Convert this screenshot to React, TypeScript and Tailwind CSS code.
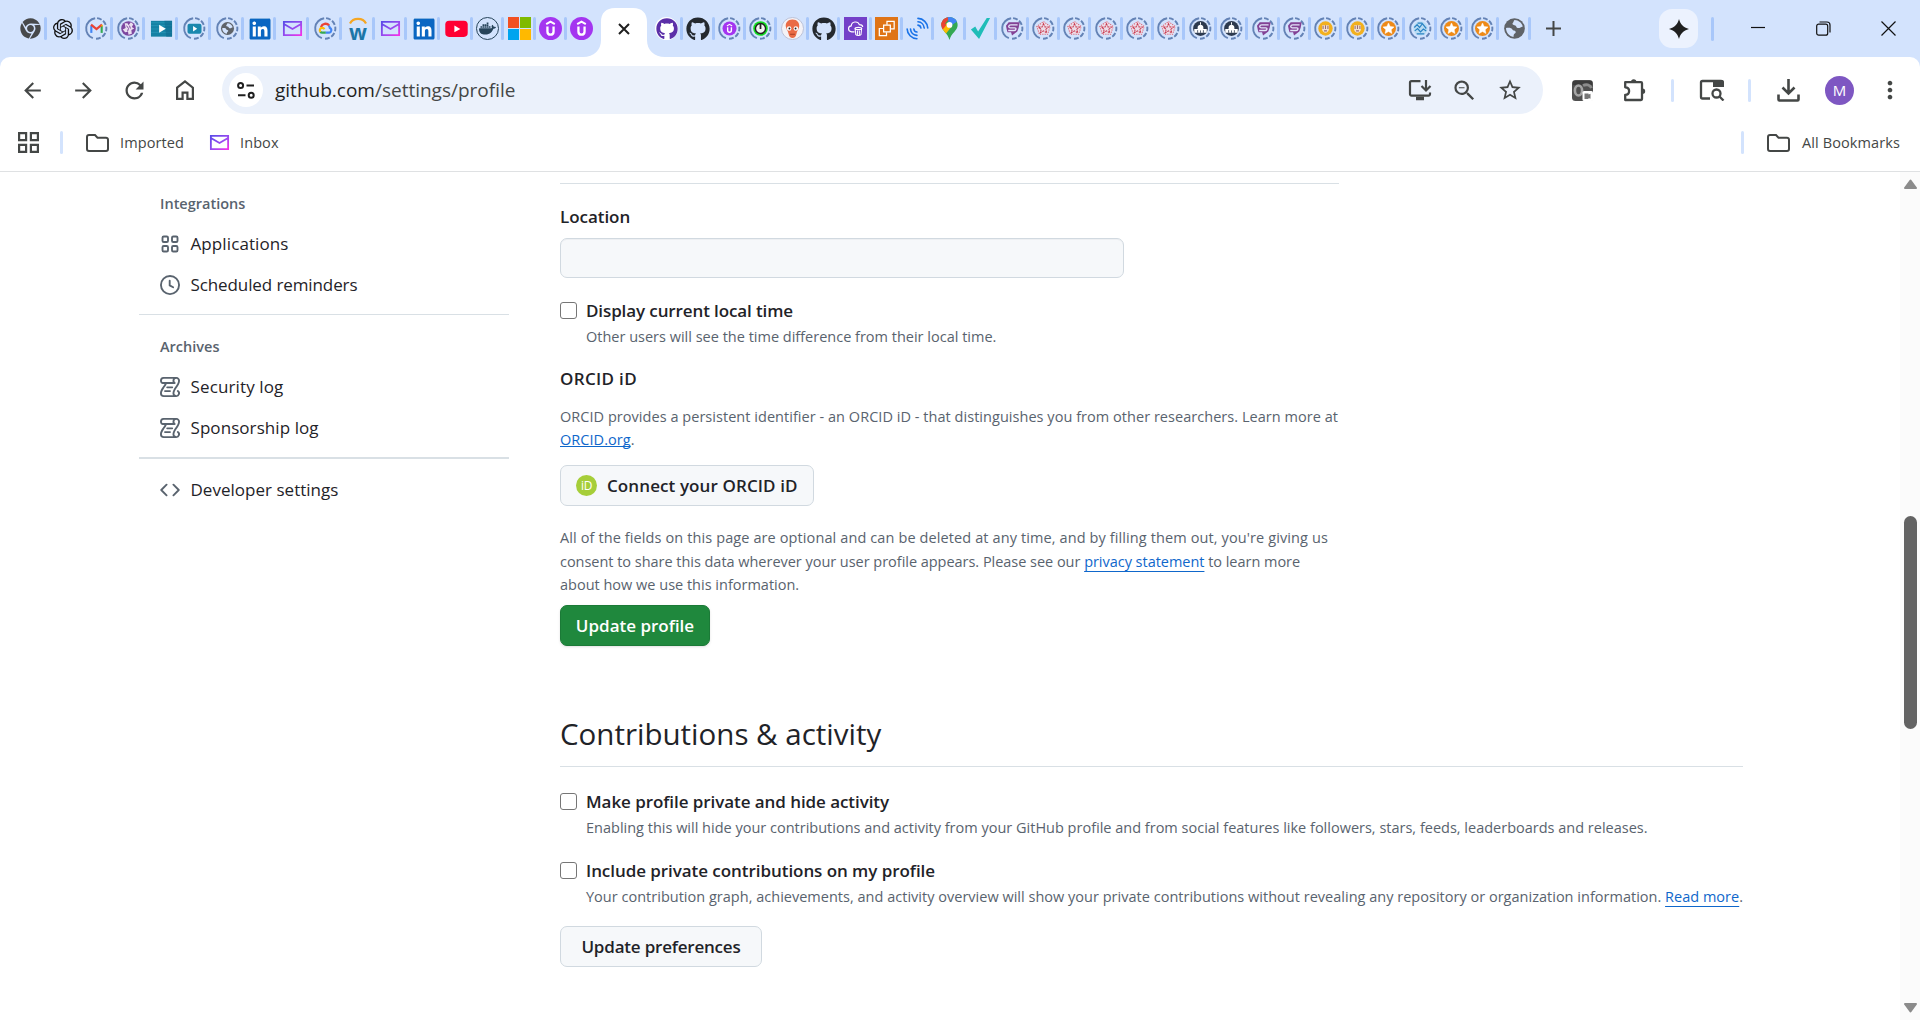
import React, { ReactNode } from "react";
import { FaChrome, FaGithub, FaLinkedin } from "react-icons/fa";
import { SiDocker, SiOpenai } from "react-icons/si";
import { MdArrowBack, MdArrowForward, MdRefresh, MdStarOutline, MdZoomOut, MdMoreVert } from "react-icons/md";

/* ---------- favicons ---------- */

function Svg({ children, size = 23 }: { children: ReactNode; size?: number }) {
  return (
    <svg className="shrink-0 overflow-visible" width={size} height={size} viewBox="0 0 24 24" fill="none">
      {children}
    </svg>
  );
}

function Ring({ children }: { children: ReactNode }) {
  return (
    <Svg>
      <path d="M8.2 22.1A10.8 10.8 0 0 1 10.6 1.3" stroke="#6483b6" strokeWidth="2" />
      <path
        d="M12.6 1.2A10.8 10.8 0 0 1 10.4 22.7"
        stroke="#6483b6"
        strokeWidth="2"
        strokeDasharray="5 1.9"
      />
      {children}
    </Svg>
  );
}

const Mail = () => (
  <Svg>
    <defs>
      <linearGradient id="mail" x1="0" y1="0" x2="1" y2="1">
        <stop offset="0" stopColor="#5a4be8" />
        <stop offset="0.55" stopColor="#9a4af0" />
        <stop offset="1" stopColor="#f530e8" />
      </linearGradient>
    </defs>
    <path
      d="M3 5h18v14H3zM3.5 7.5l8.5 5 8.5-5"
      stroke="url(#mail)"
      strokeWidth="1.9"
      strokeLinejoin="miter"
    />
  </Svg>
);

const Gmail = () => (
  <Ring>
    <path d="M6.6 16.6V9" stroke="#4285f4" strokeWidth="2.2" />
    <path d="M17.4 16.6V9" stroke="#34a853" strokeWidth="2.2" />
    <path d="M6.3 8l5.7 4.6L17.7 8" stroke="#ea4335" strokeWidth="2.4" />
    <path d="M16.3 9.4L18.5 7.7V10" fill="#fbbc04" />
  </Ring>
);

const Purple = () => (
  <Ring>
    <circle cx="12" cy="12" r="7.6" fill="#7d479f" />
    <path
      d="M8 6.500h3l1 2 2.500-3 2.500 2-1.500 3L18 12l-3 1.500.5 4-3.500 1-.5-3-3 .5L6 13l3-1.500z"
      fill="#eadff0"
    />
    <path d="M10 9l2 3-1 3M13 9l1 3" stroke="#7d479f" strokeWidth="1" />
  </Ring>
);

const Play = () => (
  <Svg>
    <path d="M1 4h22v16.500H1z" fill="#1581a4" />
    <path d="M1 6h22M1 9h22M1 12.500h22M1 16h22" stroke="#2c9cbd" strokeWidth="0.7" />
    <path d="M15 4h8v16.500h-6z" fill="#0f6b90" opacity="0.6" />
    <path d="M9.500 8l7 4.200-7 4.200z" fill="#fff" />
  </Svg>
);

const PlayRing = () => (
  <Ring>
    <rect x="4.7" y="7" width="14.6" height="10.4" rx="2" fill="#1a88ae" />
    <path d="M10.500 9.300l4.300 2.900-4.300 2.900z" fill="#fff" />
  </Ring>
);

const GlobeShape = ({ r }: { r: number }) => (
  <g transform={`translate(12 12) scale(${r / 10})`}>
    <circle r="10" fill="#5f6368" />
    <path
      d="M0 -8.200C4 -8 7 -5.500 8 -2C6 -1.500 5 0 3 -0.500C1.500 -1 2 -3 0 -3.200C-2 -3.300 -2.500 -4.500 -1.500 -5.500C-0.800 -6.200 -1 -7.500 0 -8.200Z"
      fill="#d3e3fd"
    />
    <path
      d="M-8.200 -0.500C-5 -0.800 -2.500 -0.500 -2 1C-1.600 2.300 1 1.700 1.200 3.500C1.300 5 -0.800 5 -0.800 6.500L-1 8.200C-5 7.500 -8.200 4 -8.200 -0.500Z"
      fill="#d3e3fd"
    />
  </g>
);
const GlobeRing = () => (
  <Ring>
    <GlobeShape r={6.8} />
  </Ring>
);
const Globe = () => (
  <Svg>
    <GlobeShape r={10.8} />
  </Svg>
);

const LinkedIn = () => (
  <span className="flex size-[21px] items-center justify-center rounded-[3px] bg-white">
    <FaLinkedin size={24} color="#0a66c2" className="shrink-0" />
  </span>
);

const Cloud = () => (
  <Ring>
    <path d="M7.300 10.500a5 5 0 0 1 8.500-1.700" stroke="#ea4335" strokeWidth="2.4" />
    <path d="M15.300 9a5 5 0 0 1 1.200 2.500c2.500 1 1.800 4.700-.6 4.800H12" stroke="#4285f4" strokeWidth="2.2" />
    <path d="M12.200 16.300H8.500c-.9 0-1.600-.4-2-.9" stroke="#34a853" strokeWidth="2.2" />
    <path d="M6.800 15.500c-1.500-1.700-.8-4.200 1.700-4.200 1 0 2 .6 2.400 1.500" stroke="#fbbc04" strokeWidth="2.2" />
  </Ring>
);

const Whizz = () => (
  <span className="relative flex h-[23px] w-[23px] flex-col items-center">
    <svg width="18" height="7" viewBox="0 0 18 7" fill="none" className="shrink-0">
      <path d="M1 6.500C4 0.300 14 0.300 17 6.500" stroke="#f5a623" strokeWidth="2.2" />
    </svg>
    <span className="-mt-[4px] text-[21px] font-bold leading-[24px] text-[#1c76a8]">w</span>
  </span>
);

const YouTube = () => (
  <Svg>
    <rect x="0.3" y="3.8" width="23.4" height="17" rx="4" fill="#ff0033" />
    <path d="M9.800 8.800l6.200 3.600-6.200 3.600z" fill="#fff" />
  </Svg>
);

const Docker = () => (
  <span className="flex size-[23px] items-center justify-center rounded-full border-[1.5px] border-[#27445a]">
    <SiDocker size={17} color="#27445a" />
  </span>
);

const Microsoft = () => (
  <span className="grid size-[23px] grid-cols-2 gap-px">
    <i className="bg-[#f25022]" />
    <i className="bg-[#7fba00]" />
    <i className="bg-[#00a4ef]" />
    <i className="bg-[#ffb900]" />
  </span>
);

const UdemyShape = () => (
  <g>
    <circle cx="12" cy="12" r="12" fill="#a435f0" />
    <path d="M7.500 7.500L12 4.800l4.500 2.700" stroke="#fff" strokeWidth="2" />
    <path d="M8.800 9.800v5.200c0 4.600 6.400 4.600 6.400 0V9.800" stroke="#fff" strokeWidth="2.4" />
  </g>
);
const Udemy = () => (
  <Svg>
    <UdemyShape />
  </Svg>
);
const UdemyRing = () => (
  <Ring>
    <g transform="translate(4.7 4.7) scale(0.61)">
      <UdemyShape />
    </g>
  </Ring>
);

const GithubPurple = () => (
  <span className="flex size-[23px] items-center justify-center rounded-full bg-white">
    <FaGithub size={22} color="#5b2fa8" />
  </span>
);
const Github = () => <FaGithub size={24} color="#24292f" className="shrink-0" />;

const Power = () => (
  <Ring>
    <circle cx="12" cy="12" r="7.6" fill="#12e020" />
    <circle cx="12" cy="12" r="5.3" fill="#f4f4f4" stroke="#222" strokeWidth="1.5" />
    <path d="M12 6.500v6" stroke="#222" strokeWidth="1.8" />
  </Ring>
);

const Alien = () => (
  <Svg>
    <circle cx="12" cy="12" r="11.5" fill="#f4f2f6" stroke="#b9bfd6" />
    <path
      d="M12 2.500c5 0 7.500 3.500 7 7.500-.4 3-2.500 4.500-3 8-.3 2.500-2 4-4 4s-3.700-1.500-4-4c-.5-3.500-2.600-5-3-8-.5-4 2-7.500 7-7.500z"
      fill="#ea6b45"
    />
    <circle cx="8.5" cy="12" r="2.4" fill="#fff" />
    <circle cx="15.5" cy="12" r="2.4" fill="#fff" />
    <circle cx="8.8" cy="12" r="1" fill="#222" />
    <circle cx="15.2" cy="12" r="1" fill="#222" />
    <path d="M9.500 18h5" stroke="#a33c22" />
  </Svg>
);

const AwsPurple = () => (
  <Svg>
    <path d="M0 0h24v24H0z" fill="#7440c8" />
    <path
      d="M11 15.500H8c-4.500-.5-4-6-.5-6.200C8 4.500 14.500 3.700 16 8c2.500 0 3.500 1 3.500 2.500"
      stroke="#fff"
      strokeWidth="1.2"
    />
    <ellipse cx="15" cy="12" rx="3.5" ry="1.2" stroke="#fff" strokeWidth="1.1" />
    <path d="M11.600 12l.7 6.500c1 1 4.400 1 5.400 0l.7-6.500M14 14v4.500M16 14v4.500" stroke="#fff" strokeWidth="1.1" />
  </Svg>
);

const AwsOrange = () => (
  <Svg>
    <path d="M0 0h24v24H0z" fill="#df7416" />
    <path d="M9 8.500h7v7H9z" stroke="#fff" strokeWidth="1.3" />
    <path d="M12.500 8V4.500H20v8h-3.500M8.500 12H4.500v7.500H12V16" stroke="#fff" strokeWidth="1.3" />
  </Svg>
);

const Waves = () => (
  <Svg>
    <g stroke="#1a73e8" strokeWidth="1.7" strokeLinecap="round">
      <path d="M12.500 8.500c1.600.2 2.800 1.300 3 3M12.500 5c3.500.2 6.200 3 6.500 6.500M12.500 1.500c5.500.2 10 4.500 10.200 10" />
      <path d="M8.200 12.500c.2 1.600 1.500 3 3.200 3.200M4.700 12.500c.2 3.500 3 6.300 6.700 6.700M1.200 12.500c.2 5.500 4.600 10 10.200 10.200" />
    </g>
  </Svg>
);

const MapsPin = () => (
  <Svg>
    <clipPath id="pin">
      <path d="M12 0c5 0 8.500 3.800 8.500 8.300C20.500 14.500 14 16 12 24 10 16 3.500 14.500 3.500 8.300 3.500 3.800 7 0 12 0z" />
    </clipPath>
    <g clipPath="url(#pin)">
      <path d="M0 0h24v24H0z" fill="#34a853" />
      <path d="M0 0h13L5.500 9.500 0 8z" fill="#ea4335" />
      <path d="M10 0h14v2L12 10z" fill="#4285f4" />
      <path d="M0 16L9.500 6l4 5L6 20z" fill="#fbbc04" />
      <path d="M0 2l9 6-5 6z" fill="#ea4335" />
    </g>
    <circle cx="12" cy="8.3" r="3" fill="#fff" />
  </Svg>
);

const Check = () => (
  <Svg>
    <path d="M2 13l4.500-3 3 5L18.500 1H22L10.500 23z" fill="#1fbdb8" />
  </Svg>
);

const SLogo = () => (
  <Ring>
    <path d="M5.200 9L8 5.500h11.500l-1 5.500-1.500 4-5.500 4.200-1-3.200H6.800l-.8-3z" fill="#834295" />
    <path
      d="M17.300 8.200H10.200c-2.600 0-2.900 3.100-.4 3.100h4.600c1.900 0 1.500 2.800-.6 2.800H7.500"
      stroke="#e3e6fa"
      strokeWidth="1.4"
    />
  </Ring>
);

const RedRing = () => (
  <Ring>
    <path d="M12 4.500l7.300 5.200-2.800 8.600H7.500L4.700 9.700z" fill="#ecdde8" />
    <path
      d="M12 4.800l7 5-2.700 8.200H7.700L5 9.800z"
      stroke="#d8667a"
      strokeWidth="1.1"
      strokeDasharray="1.2 1.2"
    />
    <path
      d="M12 7l1.500 3.300 3.700.2-2.800 2.400 1 3.600-3.400-2-3.400 2 1-3.600-2.800-2.400 3.700-.2z"
      stroke="#c93a50"
      strokeWidth="1.1"
      strokeDasharray="2.2 0.8"
    />
  </Ring>
);

const Capitol = () => (
  <Ring>
    <circle cx="12" cy="12" r="7.7" fill="#2d3a4e" />
    <path d="M11.500 5.500h1v2.500h-1z" fill="#fff" />
    <path d="M9 12.500V11c0-3.800 6-3.800 6 0v1.500h3.500v4h-13v-4z" fill="#fff" />
    <path d="M9 13.700v2.800M12 14v2.500M15 13.700v2.800" stroke="#2d3a4e" strokeWidth="0.8" />
  </Ring>
);

const Gold = () => (
  <Ring>
    <circle cx="12" cy="12" r="7.5" fill="#f2b01e" />
    <path d="M8.500 8.500h7v4.500c0 2-2 3-3.500 3.500-1.500-.5-3.500-1.500-3.500-3.500z" fill="#f3e3cf" />
    <path d="M9.500 9v3.500M12 8.500v4M14.500 9v3.500M10.500 14.500h3" stroke="#9a6b6f" strokeWidth="1.1" />
  </Ring>
);

const StarRing = () => (
  <Ring>
    <circle cx="12" cy="12" r="7.8" fill="#ee8a17" />
    <path
      d="M12 6.200l1.700 3.700 4.100.5-3 2.800.8 4-3.600-2-3.600 2 .8-4-3-2.800 4.100-.5z"
      fill="#fff"
      stroke="#fff"
      strokeWidth="0.5"
    />
  </Ring>
);

const BlueRing = () => (
  <Ring>
    <circle cx="12" cy="12" r="7.5" fill="#b9dcf3" />
    <path
      d="M5.500 11l3-3 2.500 3 3-4 4 5M6 14.500l3-2.500 3 3.500 3-3 3 2M8 17.500h8M9 6.500h5"
      stroke="#2a83c4"
      strokeWidth="1.3"
    />
  </Ring>
);

const leftTabs = [
  () => <FaChrome size={21} color="#47494b" />,
  () => <SiOpenai size={20} color="#111" />,
  Gmail,
  Purple,
  Play,
  PlayRing,
  GlobeRing,
  LinkedIn,
  Mail,
  Cloud,
  Whizz,
  Mail,
  LinkedIn,
];
const midTabs = [YouTube, Docker, Microsoft, Udemy, Udemy];
const rightTabs = [
  GithubPurple, Github, UdemyRing, Power, Alien, Github, AwsPurple, AwsOrange, Waves, MapsPin,
  Check, SLogo, RedRing, RedRing, RedRing, RedRing, RedRing, Capitol, Capitol, SLogo,
  SLogo, Gold, Gold, StarRing, BlueRing, StarRing, StarRing, Globe,
];

function Tab({ icon: Icon, width, sep = true }: { icon: () => ReactNode; width: string; sep?: boolean }) {
  return (
    <div className={`flex h-[23px] shrink-0 items-center gap-[2px] pl-[5px] ${width}`}>
      <span className="flex w-[23px] shrink-0 items-center justify-center">
        <Icon />
      </span>
      {sep && <span className="h-[23px] w-[3px] shrink-0 rounded-full bg-[#a8c7fa]" />}
    </div>
  );
}

function TabStrip() {
  return (
    <div className="flex h-[57px] items-center bg-[#d3e3fd] pl-[14px]">
      {leftTabs.map((t, i) => (
        <Tab key={i} icon={t} width="w-[32.75px]" />
      ))}
      {midTabs.map((t, i) => (
        <Tab key={i} icon={t} width="w-[31.4px]" sep={i < 4} />
      ))}
      <div className="relative z-10 -ml-[14px] mr-[-14.5px] flex h-[57px] w-[82px] shrink-0 items-center justify-center">
        <svg className="absolute inset-0" width="82" height="57" viewBox="0 0 82 57" fill="#fff">
          <path d="M0 57c11 0 18-7 18-17V22c0-9 5-14 14-14h18c9 0 14 5 14 14v18c0 10 7 17 18 17z" />
        </svg>
        <svg className="relative" width="12" height="12" viewBox="0 0 12 12" stroke="#1f1f1f" strokeWidth="2">
          <path d="M1 1l10 10M11 1L1 11" />
        </svg>
      </div>
      {rightTabs.map((t, i) => (
        <Tab key={i} icon={t} width="w-[31.4px]" />
      ))}
      <svg className="ml-[17px] shrink-0" width="15" height="15" viewBox="0 0 15 15" stroke="#444746" strokeWidth="2">
        <path d="M7.500 0v15M0 7.500h15" />
      </svg>
      <div className="ml-auto mr-[24px] flex shrink-0 items-center">
        <div className="flex size-[39px] items-center justify-center rounded-[13px] bg-[#ecf2fe]">
          <svg width="20" height="20" viewBox="0 0 20 20" fill="#1f1f1f">
            <path d="M10 0c1.300 5 4.200 8.500 10 10-5.800 1.500-8.700 5-10 10-1.300-5-4.200-8.500-10-10 5.800-1.500 8.700-5 10-10z" />
          </svg>
        </div>
        <span className="ml-[13px] h-[24px] w-[3px] rounded-full bg-[#a8c7fa]" />
        <svg className="ml-[37px]" width="14" height="15" viewBox="0 0 14 15" stroke="#111" strokeWidth="1.2">
          <path d="M0 6.500h14" />
        </svg>
        <svg className="ml-[51px]" width="15" height="15" viewBox="0 0 15 15" stroke="#111" strokeWidth="1.2" fill="none">
          <rect x="0.7" y="3.2" width="11" height="11" rx="2" />
          <path d="M3.500 1h7.500a3 3 0 0 1 3 3v7.500" />
        </svg>
        <svg className="ml-[50px]" width="15" height="15" viewBox="0 0 15 15" stroke="#111" strokeWidth="1.2">
          <path d="M0.500 0.500l14 14M14.500 0.500l-14 14" />
        </svg>
      </div>
    </div>
  );
}

/* ---------- toolbar ---------- */

function Slot({ children, width = "w-[40px]" }: { children: ReactNode; width?: string }) {
  return <div className={`flex shrink-0 items-center justify-center ${width}`}>{children}</div>;
}

const Divider = () => <span className="h-[23px] w-[3px] shrink-0 rounded-full bg-[#d3e3fd]" />;

function Toolbar() {
  return (
    <div className="flex h-[66px] items-center text-[#444746]">
      <div className="ml-[12px] flex items-center gap-[11px]">
        <Slot><MdArrowBack size={25} /></Slot>
        <Slot><MdArrowForward size={25} /></Slot>
        <Slot><MdRefresh size={27} /></Slot>
        <Slot>
          <svg width="18" height="20" viewBox="0 0 18 20" fill="none" stroke="#444746" strokeWidth="2.2">
            <path d="M1.100 7.700L9 1.500l7.900 6.200v11.200H11.400v-6.300H6.600v6.300H1.100z" />
          </svg>
        </Slot>
      </div>
      <div className="ml-[17px] flex h-[48px] w-[1321px] items-center rounded-full bg-[#ebf1fb] pl-[7px] pr-[11px]">
        <div className="flex size-[34px] items-center justify-center rounded-full bg-white">
          <svg width="18" height="17" viewBox="0 0 18 17" fill="none" stroke="#1f1f1f" strokeWidth="2">
            <circle cx="3.6" cy="3.5" r="2.5" />
            <circle cx="14.2" cy="13.2" r="2.5" />
            <path d="M9.500 3.500h7.500M1 13.200h7.500" />
          </svg>
        </div>
        <div className="ml-[12px] flex-1 text-[19px] leading-[26px] text-[#444746]">
          <span className="text-[#1f1f1f]">github.com</span>/settings/profile
        </div>
        <Slot width="w-[45px]">
          <svg width="24" height="22" viewBox="0 0 24 22" fill="none" stroke="#444746" strokeWidth="2.2">
            <path d="M12.500 2.100H3.500a1.500 1.500 0 0 0-1.500 1.500v11.500a1.500 1.500 0 0 0 1.500 1.500h17a1.500 1.500 0 0 0 1.500-1.500V13.500" />
            <path d="M8 19.500h8" strokeWidth="3.5" />
            <path d="M18 1v10M13.500 7l4.500 4.500L22.500 7" />
          </svg>
        </Slot>
        <Slot width="w-[45px]"><MdZoomOut size={27} /></Slot>
        <Slot width="w-[45px]"><MdStarOutline size={26} /></Slot>
      </div>
      <div className="ml-[29px] flex items-center">
        <svg width="21" height="21" viewBox="0 0 21 21" fill="none">
          <rect width="21" height="21" rx="3.5" fill="#505050" />
          <path d="M1 1h19v4H1z" fill="#3c3c3c" />
          <ellipse cx="6.5" cy="10.5" rx="3.6" ry="5" stroke="#a5a5a5" strokeWidth="2.6" />
          <path d="M11 5.500c3-1.500 7-1 8.500 2.500" stroke="#8c8c8c" strokeWidth="3" />
          <rect x="10.5" y="11" width="10.5" height="10" rx="1.5" fill="#fff" />
          <path d="M12.500 13.500h4v1l2-.8v5l-2-.8v1h-4z" fill="#777" />
        </svg>
        <Slot width="ml-[28px] w-[28px]">
          <svg width="24" height="24" viewBox="0 0 24 24" fill="none" stroke="#444746" strokeWidth="2.3">
            <path
              d="M2.200 4.200H18a1 1 0 0 1 1 1V21a1 1 0 0 1-1 1H2.200v-5.200c2.300 0 3.900-1.600 3.900-3.800S4.500 9.300 2.200 9.300z"
              strokeLinejoin="round"
            />
            <path d="M8 4a2.700 2.700 0 0 1 5.400 0zM19.500 10.500a2.700 2.700 0 0 1 0 5.400z" fill="#444746" stroke="none" />
          </svg>
        </Slot>
        <span className="ml-[22px] flex"><Divider /></span>
        <svg className="ml-[25px]" width="26" height="22" viewBox="0 0 26 22" fill="none" stroke="#444746" strokeWidth="2.3">
          <path d="M11 19.500H3.500A1.500 1.500 0 0 1 2 18V3.500A1.500 1.500 0 0 1 3.500 2H22a1.500 1.500 0 0 1 1.500 1.500V8" />
          <path d="M14 1h9a2 2 0 0 1 2 2v5H14z" fill="#444746" stroke="none" />
          <circle cx="17.5" cy="14.5" r="4" />
          <path d="M20.500 17.500l4 4" />
        </svg>
        <span className="ml-[23px] flex"><Divider /></span>
        <svg className="ml-[26px]" width="23" height="23" viewBox="0 0 23 23" fill="none" stroke="#444746" strokeWidth="2.6">
          <path d="M1.500 15.500v5a1 1 0 0 0 1 1h18a1 1 0 0 0 1-1v-5M11.500 0v14M5.500 8.500l6 6 6-6" />
        </svg>
        <div className="ml-[25px] flex size-[29px] items-center justify-center rounded-full bg-[#7e57c2] text-[15px] leading-none text-white">
          M
        </div>
        <Slot width="ml-[22px] w-[28px]"><MdMoreVert size={30} /></Slot>
      </div>
    </div>
  );
}

const Folder = () => (
  <svg width="23" height="18" viewBox="0 0 23 18" fill="none" stroke="#444746" strokeWidth="2">
    <path d="M3 1h6l2.500 2.700H20a2 2 0 0 1 2 2V15a2 2 0 0 1-2 2H3a2 2 0 0 1-2-2V3a2 2 0 0 1 2-2z" />
  </svg>
);

function Bookmarks() {
  return (
    <div className="flex h-[49px] items-start border-b border-[#dfe1e3] text-[14.5px] tracking-[0.1px] text-[#444746]">
      <div className="flex h-[39px] w-full items-center pl-[18px] pr-[20px]">
        <svg width="21" height="21" viewBox="0 0 21 21" fill="none" stroke="#444746" strokeWidth="2.2">
          <path d="M1.100 1.100h7v7h-7zM12.900 1.100h7v7h-7zM1.100 12.900h7v7h-7zM12.900 12.900h7v7h-7z" />
        </svg>
        <span className="ml-[21px] flex"><Divider /></span>
        <span className="ml-[23px]"><Folder /></span>
        <span className="ml-[11px] leading-[24px]">Imported</span>
        <span className="ml-[24px]"><Mail /></span>
        <span className="ml-[9px] leading-[24px]">Inbox</span>
        <span className="ml-auto flex"><Divider /></span>
        <span className="ml-[23px]"><Folder /></span>
        <span className="ml-[12px] leading-[24px]">All Bookmarks</span>
      </div>
    </div>
  );
}

/* ---------- settings page ---------- */

function Octicon({ children }: { children: ReactNode }) {
  return (
    <svg width="20" height="20" viewBox="0 0 16 16" fill="none" stroke="currentColor" strokeWidth="1.5">
      {children}
    </svg>
  );
}

const AppsIcon = () => (
  <Octicon>
    <rect x="2" y="2" width="4.4" height="4.4" rx="1" />
    <rect x="9.6" y="2" width="4.4" height="4.4" rx="1" />
    <rect x="2" y="9.6" width="4.4" height="4.4" rx="1" />
    <rect x="9.6" y="9.6" width="4.4" height="4.4" rx="1" />
  </Octicon>
);

const ClockIcon = () => (
  <Octicon>
    <circle cx="8" cy="8" r="7.25" />
    <path d="M7.75 4.500v3.800l2.750 1.500" strokeLinecap="round" strokeLinejoin="round" />
  </Octicon>
);

const CodeIcon = () => (
  <Octicon>
    <path d="M5.250 3.750L1 8l4.250 4.250M10.750 3.750L15 8l-4.250 4.250" strokeLinecap="round" strokeLinejoin="round" />
  </Octicon>
);

const LogIcon = () => (
  <Octicon>
    <g fill="currentColor" stroke="none">
      <path d="M5 8.250a.75.75 0 0 1 .75-.75h4a.75.75 0 0 1 0 1.500h-4A.75.75 0 0 1 5 8.250ZM4 10.500A.75.75 0 0 0 4 12h4a.75.75 0 0 0 0-1.500H4Z" />
      <path d="M13-.005c1.654 0 3 1.328 3 3 0 .982-.338 1.933-.783 2.818-.443.879-1.028 1.758-1.582 2.588l-.011.017c-.568.853-1.104 1.659-1.501 2.446-.398.789-.623 1.494-.623 2.136a1.500 1.500 0 1 0 2.333-1.248.75.75 0 0 1 .834-1.246A3 3 0 0 1 13 16H3a3 3 0 0 1-3-3c0-1.582.891-3.135 1.777-4.506.209-.322.418-.637.623-.946.473-.709.923-1.386 1.287-2.048H2.510c-.576 0-1.381-.133-1.907-.783A2.680 2.680 0 0 1 0 2.995a3 3 0 0 1 3-3Zm0 1.500a1.500 1.500 0 0 0-1.500 1.500c0 .476.223.834.667 1.132A.75.75 0 0 1 11.750 5.500H5.368c-.467 1.003-1.141 2.015-1.773 2.963-.192.289-.381.571-.558.845C2.130 10.711 1.500 11.916 1.500 13A1.500 1.500 0 0 0 3 14.500h7.401A2.989 2.989 0 0 1 10 13c0-.979.338-1.928.784-2.812.441-.874 1.023-1.748 1.575-2.576l.017-.026c.568-.853 1.103-1.658 1.501-2.448.398-.79.623-1.497.623-2.143 0-.838-.669-1.500-1.500-1.500Zm-10 0a1.500 1.500 0 0 0-1.500 1.500c0 .321.100.569.270.778.097.120.325.227.740.227h7.674A2.737 2.737 0 0 1 10 2.995c0-.546.146-1.059.401-1.500Z" />
    </g>
  </Octicon>
);

function NavItem({ icon, label, track }: { icon: ReactNode; label: string; track: string }) {
  return (
    <a className="flex h-[41px] items-center gap-[10.5px] pl-[21px] text-[17px] leading-[26px]">
      <span className="text-[#59636e]">{icon}</span>
      <span className={track}>{label}</span>
    </a>
  );
}

function Sidebar() {
  const head = "pl-[21px] text-[14.5px] font-semibold leading-[22px] text-[#59636e]";
  return (
    <nav className="ml-[139px] w-[370px] shrink-0 pt-[21px]">
      <h3 className={head}>Integrations</h3>
      <div className="h-2" />
      <NavItem icon={<AppsIcon />} label="Applications" track="tracking-[0.1px]" />
      <NavItem icon={<ClockIcon />} label="Scheduled reminders" track="tracking-[-0.1px]" />
      <div className="mt-[9px] h-px bg-[#d9e0e5]" />
      <h3 className={`mt-[21px] ${head}`}>Archives</h3>
      <div className="h-[8px]" />
      <NavItem icon={<LogIcon />} label="Security log" track="tracking-[0.13px]" />
      <NavItem icon={<LogIcon />} label="Sponsorship log" track="tracking-[0.07px]" />
      <div className="mt-[9px] h-[2px] bg-[#d9e0e5]" />
      <div className="h-[10px]" />
      <NavItem icon={<CodeIcon />} label="Developer settings" track="tracking-[0.02px]" />
    </nav>
  );
}

function CheckRow({ title, track, children }: { title: string; track: string; children: ReactNode }) {
  return (
    <div className="flex gap-[9px]">
      <span className="mt-[4px] size-[17px] shrink-0 rounded-[3px] border-[1.5px] border-[#767676] bg-white" />
      <div>
        <div className={`text-[17px] font-semibold leading-[26px] ${track}`}>{title}</div>
        <div className="whitespace-nowrap text-[14.5px] leading-[25px] text-[#59636e]">{children}</div>
      </div>
    </div>
  );
}

const btn =
  "flex h-[41px] items-center rounded-[7px] border text-[17px] font-semibold leading-[26px] whitespace-nowrap";
const link = "text-[#0f67cb] underline decoration-1 [text-decoration-skip-ink:none]";

function Main() {
  return (
    <main className="ml-[51px] w-[1183px] pt-[11px]">
      <div className="h-px w-[779px] bg-[#d9e0e5]" />
      <label className="mt-[20px] block text-[17px] font-semibold leading-[26px] tracking-[-0.05px]">Location</label>
      <div className="mt-[8px] mb-[20px] h-[40px] w-[564px] rounded-[7px] border border-[#d1d9e0] bg-[#f6f8fa] shadow-[inset_0_1px_0_rgba(31,35,40,0.04)]" />
      <CheckRow title="Display current local time" track="tracking-[-0.11px]">
        Other users will see the time difference from their local time.
      </CheckRow>
      <h4 className="mt-[17px] text-[17px] font-semibold leading-[26px] tracking-[0.33px]">ORCID iD</h4>
      <p className="mt-[13px] whitespace-nowrap text-[14.5px] leading-[23px] tracking-[0.039px] text-[#59636e]">
        ORCID provides a persistent identifier - an ORCID iD - that distinguishes you from other researchers. Learn more
        at
        <br />
        <a className={`${link} underline-offset-1`}>ORCID.org</a>.
      </p>
      <button className={`${btn} mt-[14px] w-[254px] gap-[10px] border-[#d1d9e0] bg-[#f6f8fa] pl-[15px] tracking-[0.1px]`}>
        <span className="flex size-[21px] items-center justify-center rounded-full bg-[#a6ce39] text-[12px] font-normal leading-none tracking-[-0.3px] text-white">
          iD
        </span>
        Connect your ORCID iD
      </button>
      <p className="mt-[20px] whitespace-nowrap text-[14.5px] leading-[23.5px] text-[#59636e]">
        <span className="tracking-[0.111px]">
          All of the fields on this page are optional and can be deleted at any time, and by filling them out, you're
          giving us
        </span>
        <br />
        <span className="tracking-[-0.03px]">
          consent to share this data wherever your user profile appears. Please see our{" "}
          <a className={`${link} underline-offset-[4px]`}>privacy statement</a> to learn more
        </span>
        <br />
        about how we use this information.
      </p>
      <button className={`${btn} mt-[8.5px] w-[150px] justify-center border-[#1b7a37] bg-[#1f883d] text-white shadow-sm`}>
        Update profile
      </button>
      <h2 className="mt-[69px] text-[29.5px] leading-[38px]">Contributions &amp; activity</h2>
      <div className="mt-[13px] mb-[22px] h-px bg-[#d9e0e5]" />
      <CheckRow title="Make profile private and hide activity" track="tracking-[-0.066px]">
        Enabling this will hide your contributions and activity from your GitHub profile and from social features like
        followers, stars, feeds, leaderboards and releases.
      </CheckRow>
      <div className="h-[18px]" />
      <CheckRow title="Include private contributions on my profile" track="tracking-[-0.058px]">
        <span className="tracking-[0.014px]">
          Your contribution graph, achievements, and activity overview will show your private contributions without
          revealing any repository or organization information.{" "}
          <a className={`${link} underline-offset-[4px]`}>Read more</a>.
        </span>
      </CheckRow>
      <button className={`${btn} mt-[17px] w-[202px] justify-center border-[#d1d9e0] bg-[#f6f8fa] tracking-[-0.2px]`}>
        Update preferences
      </button>
    </main>
  );
}

function Scrollbar() {
  return (
    <div className="ml-auto flex h-full w-[20px] shrink-0 flex-col items-center bg-[#fbfbfb] pt-[7px] pb-[7px]">
      <svg width="13" height="10" viewBox="0 0 13 10" fill="#8b8b8b" stroke="#8b8b8b" strokeWidth="2" strokeLinejoin="round">
        <path d="M6.500 1.500L12 9H1z" />
      </svg>
      <div className="mt-[327px] h-[213px] w-[13px] rounded-full bg-[#636363]" />
      <svg className="mt-auto" width="13" height="10" viewBox="0 0 13 10" fill="#8b8b8b" stroke="#8b8b8b" strokeWidth="2" strokeLinejoin="round">
        <path d="M6.500 8.500L1 1h11z" />
      </svg>
    </div>
  );
}

export default function App() {
  return (
    <div className="flex h-[1020px] w-[1920px] flex-col overflow-hidden bg-white font-['Open_Sans',sans-serif] text-[#1f2328]">
      <header className="shrink-0 bg-[#d3e3fd]">
        <TabStrip />
        <div className="rounded-t-[10px] bg-white">
          <Toolbar />
          <Bookmarks />
        </div>
      </header>
      <div className="flex min-h-0 flex-1">
        <Sidebar />
        <Main />
        <Scrollbar />
      </div>
    </div>
  );
}
